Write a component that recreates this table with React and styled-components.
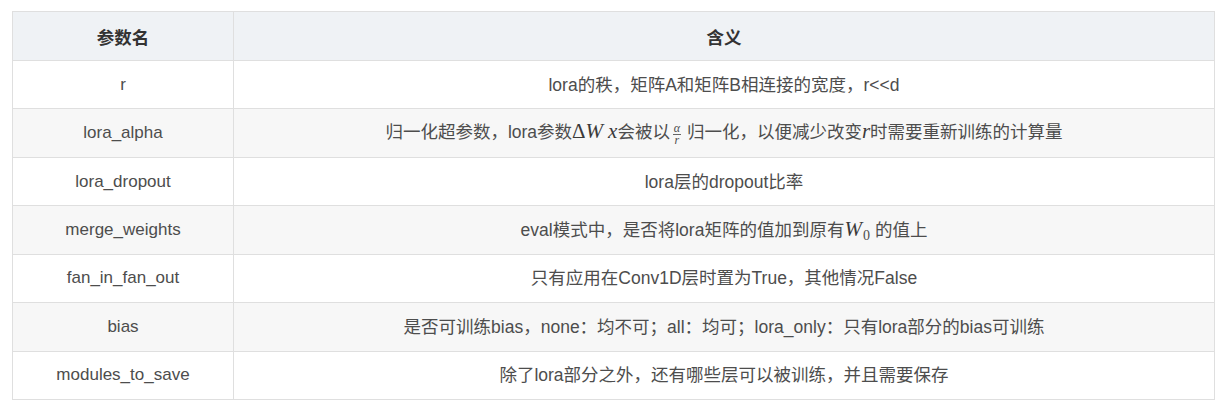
import React from "react";
import styled, { createGlobalStyle } from "styled-components";

const Global = createGlobalStyle`
  html, body { margin: 0; padding: 0; background: #fff; }
  body { font-family: "Liberation Sans", Arial, "Noto Sans CJK SC", sans-serif; }
`;

const Wrap = styled.div`
  padding: 11px 16px 0 12px;
`;

const Table = styled.table`
  width: 1203px;
  border-collapse: collapse;
  font-size: 17.5px;
  color: #4d4d4d;
`;

const Th = styled.th`
  background: #eff2f5;
  border: 1px solid #dfdfdf;
  height: 48px;
  padding: 0 10px;
  font-weight: bold;
  color: #333;
  text-align: center;
  width: ${(p) => p.$w || "auto"};
`;

const Tr = styled.tr`
  background: ${(p) => (p.$striped ? "#f7f7f7" : "#fff")};
`;

const Td = styled.td`
  border: 1px solid #dfdfdf;
  height: 47.45px;
  padding: 0 10px;
  text-align: center;
  line-height: 22px;
  font-size: ${(p) => p.$size || "inherit"};
`;

const M = styled.span`
  font-family: "Liberation Serif", "DejaVu Serif", serif;
  font-style: ${(p) => (p.$up ? "normal" : "italic")};
  font-size: 21px;
  line-height: 0;
  color: #3a3a3a;
  margin-right: ${(p) => p.$gap || "0px"};
`;

const Sub = styled.sub`
  font-family: "Liberation Serif", serif;
  font-size: 14px;
  line-height: 0;
  vertical-align: -4px;
  margin-left: 1px;
  margin-right: 5px;
`;

const Frac = styled.span`
  display: inline-flex;
  flex-direction: column;
  align-items: center;
  justify-content: center;
  vertical-align: middle;
  font-family: "Liberation Serif", serif;
  font-style: italic;
  font-size: 12px;
  line-height: 11px;
  height: 24px;
  margin: 0 6px 0 3px;
  position: relative;
  top: 1px;
`;

const FracPart = styled.span`
  display: block;
  height: 11px;
  overflow: visible;
`;

const FracBar = styled.span`
  display: block;
  width: 8px;
  border-top: 1px solid #666;
`;

const rows = [
  ["r", <>lora的秩，矩阵A和矩阵B相连接的宽度，r&lt;&lt;d</>],
  [
    "lora_alpha",
    <>
      归一化超参数，lora参数<M $up>Δ</M><M $gap="5px">W</M><M>x</M>会被以
      <Frac>
        <FracPart>α</FracPart>
        <FracBar />
        <FracPart>r</FracPart>
      </Frac>
      归一化，以便减少改变<M>r</M>时需要重新训练的计算量
    </>,
  ],
  ["lora_dropout", <>lora层的dropout比率</>],
  [
    "merge_weights",
    <>
      eval模式中，是否将lora矩阵的值加到原有<M>W</M>
      <Sub>0</Sub>的值上
    </>,
  ],
  ["fan_in_fan_out", <>只有应用在Conv1D层时置为True，其他情况False</>],
  ["bias", <>是否可训练bias，none：均不可；all：均可；lora_only：只有lora部分的bias可训练</>],
  ["modules_to_save", <>除了lora部分之外，还有哪些层可以被训练，并且需要保存</>],
];

export default function App() {
  return (
    <>
      <Global />
      <Wrap>
        <Table>
          <thead>
            <tr>
              <Th $w="200px">参数名</Th>
              <Th>含义</Th>
            </tr>
          </thead>
          <tbody>
            {rows.map(([name, desc], i) => (
              <Tr key={name} $striped={i % 2 === 1}>
                <Td $size="17px">{name}</Td>
                <Td>{desc}</Td>
              </Tr>
            ))}
          </tbody>
        </Table>
      </Wrap>
    </>
  );
}
